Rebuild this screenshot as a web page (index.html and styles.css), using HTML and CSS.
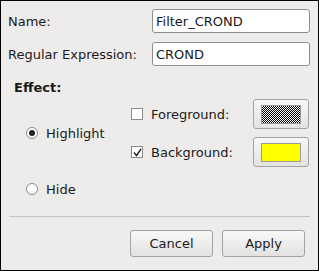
FILE: index.html
```html
<!DOCTYPE html><html><head><meta charset='utf-8'/>
<title>Filter</title>
<link rel="stylesheet" href="styles.css">
</head>
<body>
<div class="dialog">
	<div class="fields">
		<label class="lbl">Name:</label>
		<div class="entry">Filter_CROND</div>
		<label class="lbl">Regular Expression:</label>
		<div class="entry">CROND</div>
	</div>

	<div class="heading">Effect:</div>

	<div class="effects">
		<div class="opt highlight"><span class="radio on"></span>Highlight</div>
		<div class="opt fg"><span class="check"></span>Foreground:</div>
		<div class="colorbtn fgbtn"><span class="swatch checker"></span></div>
		<div class="opt bg"><span class="check"><svg width="9" height="9" viewBox="0 0 9 9"><path d="M1 4.5 L3.5 7.5 L8 1" fill="none" stroke="#222" stroke-width="1.4"/></svg></span>Background:</div>
		<div class="colorbtn bgbtn"><span class="swatch yellow"></span></div>
		<div class="opt hide"><span class="radio"></span>Hide</div>
	</div>

	<div class="sep"></div>

	<div class="actions">
		<div class="btn">Cancel</div>
		<div class="btn">Apply</div>
	</div>
</div>
</body>
</html>
```

FILE: styles.css
```css
body {
	margin: 0px;
	font: 13px/15px "DejaVu Sans", sans-serif;
	color: #1a1a1a;
}
.dialog {
	box-sizing: border-box;
	width: 319px;
	height: 271px;
	border: 1px solid #000;
	background: #edeceb;
	padding: 8px 8px 0 7px;
}
.fields {
	display: grid;
	grid-template-columns: 144px 1fr;
	row-gap: 9px;
	align-items: center;
}
.lbl {
	padding-top: 1px;
}
.entry {
	box-sizing: border-box;
	height: 24px;
	background: #fff;
	border: 1px solid #8e8e8e;
	border-radius: 3px;
	padding: 4px 0 0 3px;
}
.heading {
	font-weight: bold;
	margin: 14px 0 0 6px;
}
.effects {
	display: grid;
	grid-template-columns: 122px 122px 56px;
	grid-template-rows: 30px 30px 24px;
	row-gap: 8px;
	margin-top: 4px;
	margin-left: 1px;
}
.opt {
	display: flex;
	align-items: center;
	gap: 8px;
}
.highlight {
	grid-row: 1 / 3;
	grid-column: 1;
	padding-left: 17px;
}
.hide {
	grid-row: 3;
	grid-column: 1;
	padding-left: 17px;
	padding-top: 4px;
}
.fg { grid-row: 1; grid-column: 2; }
.bg { grid-row: 2; grid-column: 2; }
.fgbtn { grid-row: 1; grid-column: 3; }
.bgbtn { grid-row: 2; grid-column: 3; }
.radio {
	box-sizing: border-box;
	width: 12px;
	height: 12px;
	border: 1px solid #8a8a8a;
	border-radius: 50%;
	background: #fff;
	display: flex;
	align-items: center;
	justify-content: center;
}
.radio.on::after {
	content: "";
	width: 6px;
	height: 6px;
	border-radius: 50%;
	background: #222;
}
.check {
	box-sizing: border-box;
	width: 12px;
	height: 12px;
	border: 1px solid #8a8a8a;
	background: #fff;
	display: flex;
	align-items: center;
	justify-content: center;
}
.check svg {
	display: block;
}
.colorbtn {
	box-sizing: border-box;
	border: 1px solid #a3a3a3;
	border-radius: 3px;
	background: linear-gradient(#f7f7f7, #e4e3e2);
	display: flex;
	align-items: center;
	justify-content: center;
}
.swatch {
	box-sizing: border-box;
	width: 40px;
	height: 19px;
	border: 1px solid #9a9a9a;
}
.checker {
	background: repeating-conic-gradient(#000 0 25%, #fff 0 50%) 1px 1px / 2px 2px;
}
.yellow {
	background: #ffff00;
}
.sep {
	height: 1px;
	background: #c4c3c2;
	margin: 17px 0 0 1px;
}
.actions {
	display: flex;
	justify-content: flex-end;
	gap: 9px;
	margin-top: 13px;
	padding-right: 5px;
}
.btn {
	box-sizing: border-box;
	width: 83px;
	height: 27px;
	border: 1px solid #a3a3a3;
	border-radius: 3px;
	background: linear-gradient(#f8f8f8, #e3e2e1);
	text-align: center;
	line-height: 25px;
}
```
